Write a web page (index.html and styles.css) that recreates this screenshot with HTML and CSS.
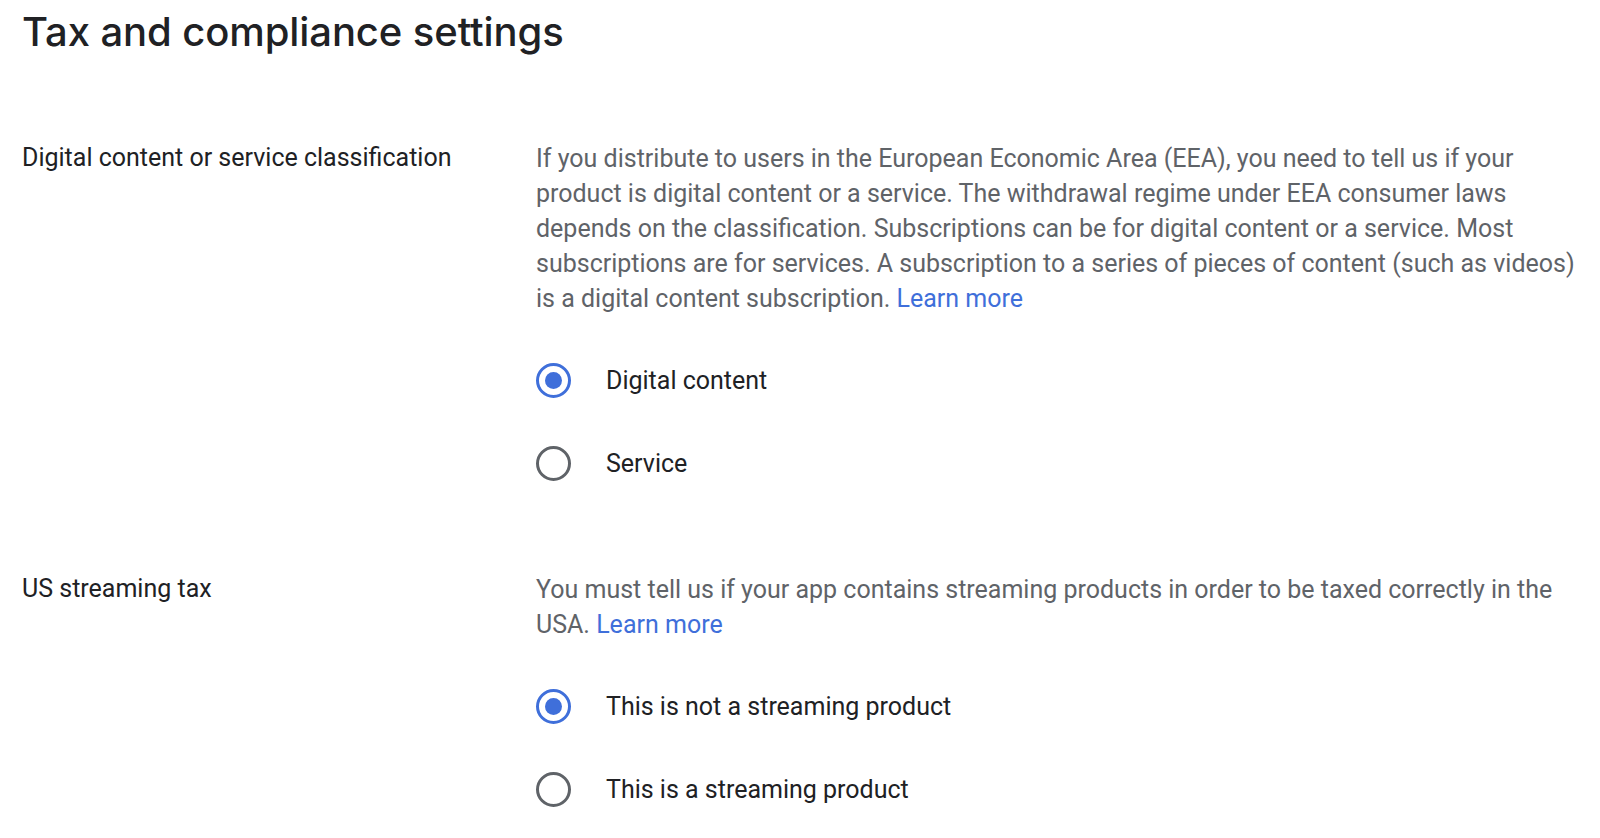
FILE: index.html
```html
<!DOCTYPE html>
<html lang="en">
<head>
<meta charset="utf-8">
<title>Tax and compliance settings</title>
<link rel="stylesheet" href="styles.css">
</head>
<body>
<main class="page">
  <h1 class="page-title">Tax and compliance settings</h1>

  <section class="setting">
    <div class="setting-label">Digital content or service classification</div>
    <div class="setting-body">
      <p class="setting-desc">If you distribute to users in the European Economic Area (EEA), you need to tell us if your product is digital content or a service. The withdrawal regime under EEA consumer laws depends on the classification. Subscriptions can be for digital content or a service. Most subscriptions are for services. A subscription to a series of pieces of content (such as videos) is a digital content subscription. <a class="link" href="#">Learn more</a></p>
      <div class="radio-group">
        <label class="radio-row">
          <span class="radio radio-checked"></span>
          <span class="radio-text">Digital content</span>
        </label>
        <label class="radio-row">
          <span class="radio"></span>
          <span class="radio-text">Service</span>
        </label>
      </div>
    </div>
  </section>

  <section class="setting setting-second">
    <div class="setting-label">US streaming tax</div>
    <div class="setting-body">
      <p class="setting-desc">You must tell us if your app contains streaming products in order to be taxed correctly in the USA. <a class="link" href="#">Learn more</a></p>
      <div class="radio-group">
        <label class="radio-row">
          <span class="radio radio-checked"></span>
          <span class="radio-text">This is not a streaming product</span>
        </label>
        <label class="radio-row">
          <span class="radio"></span>
          <span class="radio-text">This is a streaming product</span>
        </label>
      </div>
    </div>
  </section>
</main>
</body>
</html>
```

FILE: styles.css
```css
html, body {
  margin: 0;
  padding: 0;
  background: #ffffff;
}

.page {
  padding: 8px 0 0 22px;
  font-family: Roboto, "Liberation Sans", Arial, sans-serif;
}

.page-title {
  margin: 0;
  font-family: Inter, "Open Sans", Roboto, sans-serif;
  font-weight: 500;
  font-size: 40px;
  line-height: 48px;
  color: #202124;
  letter-spacing: -0.1px;
}

.setting {
  display: flex;
  margin-top: 85px;
}

.setting-second {
  margin-top: 67px;
}

.setting-label {
  width: 514px;
  flex: none;
  font-size: 25px;
  line-height: 33px;
  color: #202124;
}

.setting-body {
  width: 1054px;
  flex: none;
}

.setting-desc {
  margin: 0;
  font-size: 25px;
  line-height: 35px;
  color: #5f6368;
}

.link {
  color: #3f6fda;
  text-decoration: none;
}

.radio-group {
  margin-top: 23px;
  display: flex;
  flex-direction: column;
}

.radio-row {
  display: flex;
  align-items: center;
  height: 83px;
}

.radio {
  box-sizing: border-box;
  width: 35px;
  height: 35px;
  border-radius: 50%;
  border: 3px solid #5f6368;
  display: flex;
  align-items: center;
  justify-content: center;
  flex: none;
}

.radio-checked {
  border-color: #3f6fda;
}

.radio-checked::after {
  content: "";
  width: 17px;
  height: 17px;
  border-radius: 50%;
  background: #3f6fda;
}

.radio-text {
  margin-left: 35px;
  font-size: 25px;
  color: #202124;
}
```
